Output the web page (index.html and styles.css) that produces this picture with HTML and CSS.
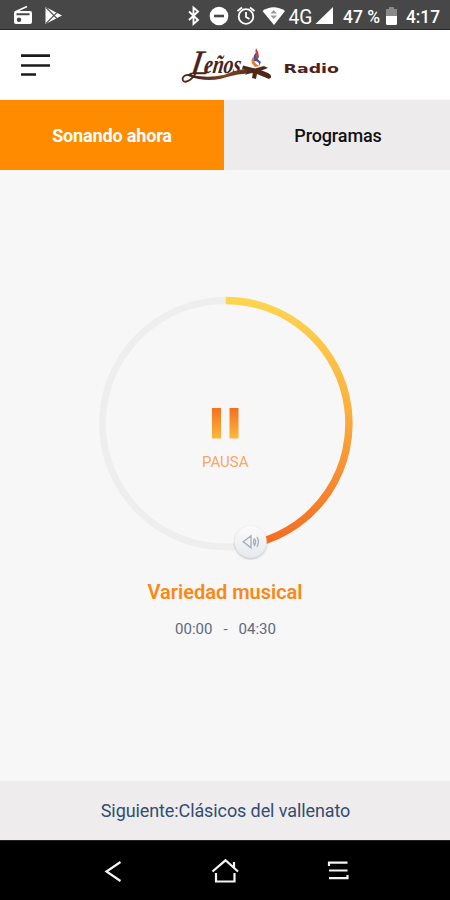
FILE: index.html
```html
<!DOCTYPE html>
<html lang="es">
<head>
<meta charset="utf-8">
<title>Leños Radio</title>
<link rel="stylesheet" href="styles.css">
</head>
<body>
<div class="app">
  <div class="status">
    <svg width="70" height="30" viewBox="0 0 70 30">
      <path d="M15 12 27 6.500" stroke="#fff" stroke-width="1.600"/>
      <path fill="#fff" fill-rule="evenodd" d="M16 11H30Q32 11 32 13V22Q32 24 30 24H16Q14 24 14 22V13Q14 11 16 11ZM16.500 13.300V15.300H29.500V13.300ZM19 17.500A2.200 2.200 0 1 0 19 22A2.200 2.200 0 1 0 19 17.500Z"/>
      <path fill="#fff" d="M45.500 7 62 15.500 45.500 24Z"/>
      <path d="M46 7.500 57 18.500M46 23.500 57 12.500" stroke="#555" stroke-width="1.100"/>
    </svg>
    <svg width="270" height="30" viewBox="180 0 270 30">
      <path d="M189 11.500 198 20 193.500 24V7.500L198 11.500 189 20" fill="none" stroke="#fff" stroke-width="1.900"/>
      <circle cx="219" cy="16" r="9.300" fill="#fff"/>
      <path d="M214 16H224" stroke="#474747" stroke-width="2.600"/>
      <g fill="none" stroke="#fff" stroke-width="1.800">
        <circle cx="246" cy="16.500" r="7.300"/>
        <path d="M246 12V17L249.500 19M237.500 11 242 7.500M254.500 11 250 7.500"/>
      </g>
      <path fill="#fff" d="M262.500 11Q273.500 3.500 285 11L274 25Z"/>
      <path fill="#999" d="M270.500 13.500 273.700 10 277 13.500ZM270.500 15.500H277L273.700 19Z"/>
      <text class="net" x="288.500" y="24" textLength="24" lengthAdjust="spacingAndGlyphs">4G</text>
      <path fill="#fff" d="M315.500 24 333 7V24Z"/>
      <text class="digits" x="343" y="22.500" textLength="37" lengthAdjust="spacingAndGlyphs">47 %</text>
      <path fill="#898989" d="M389 7H394V9H397V16H386V9H389Z"/>
      <path fill="#fff" d="M386 16H397V23.500Q397 25 395.500 25H387.500Q386 25 386 23.500Z"/>
      <text class="digits" x="406" y="22.500" textLength="34" lengthAdjust="spacingAndGlyphs">4:17</text>
    </svg>
  </div>
  <header class="header">
    <svg class="menu" width="30" height="23" viewBox="0 0 30 23">
      <path d="M0 1.700H29M0 11.500H29M0 20.500H15" stroke="#1b1b1f" stroke-width="2.700"/>
    </svg>
    <svg class="logo" width="170" height="46" viewBox="175 40 170 46">
      <defs>
        <linearGradient id="wood"><stop offset="0" stop-color="#3b2018"/><stop offset=".45" stop-color="#7b4327"/><stop offset="1" stop-color="#3b2018"/></linearGradient>
      </defs>
      <text class="brand" transform="translate(190 74) skewX(-8)"><tspan class="cap">L</tspan><tspan x="13" y="-1.500" textLength="37" lengthAdjust="spacingAndGlyphs">eños</tspan></text>
      <path fill="none" stroke="#51291b" stroke-width="1.800" stroke-linecap="round" d="M196 73C191 81 183 85 182.500 78.500Q184 74 191 75"/>
      <path fill="url(#wood)" d="M188 74Q205 79 224 75Q243 67 258 69L268 73Q273 76 270 78.500Q264 77 256 73Q238 73 220 79Q204 82 188 76Z"/>
      <path fill="#50281b" d="M243 65.500 255 68.500 264 66 268 68 260 71 271 76 269 79 257 74 256 79 252 78 253 72 245 75 249 70 242 69Z"/>
      <path fill="#e4802d" d="M255 67Q249 62 253 57Q254 64 260 66Z"/>
      <path fill="#4452a0" d="M254 61Q252 55 257 52Q255 58 261 62L259 66Q260 61 254 61Z"/>
      <path fill="#c04339" d="M256 54Q255 50 256 48Q259 52 259 57L257 60Z"/>
      <text class="radio" x="283.500" y="73.200" textLength="55.500" lengthAdjust="spacingAndGlyphs">Radio</text>
    </svg>
  </header>
  <nav class="tabs">
    <div class="tab on"><span>Sonando ahora</span></div>
    <div class="tab"><span>Programas</span></div>
  </nav>
  <main class="player">
    <svg class="dial" width="270" height="270" viewBox="90 290 270 270">
      <defs>
        <linearGradient id="arc" x1="0" y1="297" x2="0" y2="545" gradientUnits="userSpaceOnUse"><stop offset="0" stop-color="#fdd64f"/><stop offset=".45" stop-color="#fbb03f"/><stop offset="1" stop-color="#f36b21"/></linearGradient>
        <linearGradient id="bar" x1="0" y1="0" x2="0" y2="1"><stop offset="0" stop-color="#f3701f"/><stop offset="1" stop-color="#fcb93c"/></linearGradient>
        <linearGradient id="knob" x1="0" y1="0" x2="0" y2="1"><stop offset="0" stop-color="#fafbfc"/><stop offset="1" stop-color="#e6e9ed"/></linearGradient>
        <filter id="shade" x="-30%" y="-30%" width="160%" height="160%"><feDropShadow dx="0" dy="1" stdDeviation="1.200" flood-color="#8a929b" flood-opacity=".6"/></filter>
      </defs>
      <circle cx="225.700" cy="423.700" r="123.200" fill="none" stroke="#eee" stroke-width="6.800"/>
      <path d="M225.700 300.500A123.200 123.200 0 0 1 258 542.600" fill="none" stroke="url(#arc)" stroke-width="7.400"/>
      <path d="M212 408H221V438.500H212ZM229.500 408H238.500V438.500H229.500Z" fill="url(#bar)"/>
      <text class="pause" x="202" y="467" textLength="46.500" lengthAdjust="spacingAndGlyphs">PAUSA</text>
      <circle cx="250.700" cy="542" r="16" fill="url(#knob)" filter="url(#shade)"/>
      <path d="M243.300 541.800 251 535.800V547.800ZM254.500 538.500Q252.500 541.800 254.500 545.300Q256.800 541.800 254.500 538.500M257 537Q260 541.800 257 546.800" fill="none" stroke="#a5adb7" stroke-width="1.300"/>
    </svg>
    <h1 class="title">Variedad musical</h1>
    <div class="time"><span>00:00</span><span>-</span><span>04:30</span></div>
  </main>
  <div class="next"><span>Siguiente:Clásicos del vallenato</span></div>
  <footer class="keys">
    <svg width="18" height="22" viewBox="104 859 18 22"><path d="M120.500 861 106.500 870.500 120.500 880"/></svg>
    <svg width="30" height="28" viewBox="210 857 30 28"><path d="M212.500 871.500 225.500 860.300 238 871.500M216 873V881.500H234.500V873M234 862V867.500"/></svg>
    <svg width="22" height="22" viewBox="327 860 22 22"><path d="M329 866V862.700H347.500M329 870.500H347.500M329 878.200H347.500V875"/></svg>
  </footer>
</div>
</body>
</html>
```
FILE: styles.css
```css
* { box-sizing: border-box; }
body { margin: 0; font-family: Roboto, "Liberation Sans", sans-serif; background: #f7f7f7; }
svg { display: block; flex: none; }
.app { width: 450px; height: 900px; display: flex; flex-direction: column; overflow: hidden; }
.status { height: 30px; background: #474747; border-bottom: 1px solid #2b2727; display: flex; justify-content: space-between; overflow: hidden; }
.net { font-size: 21px; fill: #fff; }
.digits { font-size: 18px; font-weight: 500; fill: #fff; }
.header { height: 70px; background: #fff; display: flex; align-items: flex-start; padding: 10px 0 0 21px; border-bottom: 1px solid #fcfaf0; }
.menu { margin: 14px 0 0; }
.logo { margin-left: 124px; }
.brand { font: italic bold 26px "Liberation Serif", serif; fill: #47241a; }
.cap { font-size: 34px; font-weight: normal; stroke: #47241a; stroke-width: .5px; }
.radio { font: bold 12.5px "DejaVu Sans", sans-serif; fill: #4c211b; }
.tabs { height: 70px; display: grid; grid-template-columns: 224px 226px; }
.tab { display: flex; align-items: center; justify-content: center; background: #edebec; color: #111; font-size: 18px; font-weight: 500; padding: 1px 0 0 2px; letter-spacing: -.12px; }
.tab.on { background: #ff8c00; color: #fff; padding-left: 0; font-weight: 700; letter-spacing: -.15px; }
.player { flex: 1; display: flex; flex-direction: column; align-items: center; background: #f7f7f7; padding-top: 120px; }
.pause { font-size: 15.5px; fill: #f7a668; }
.title { margin: 19px 0 0; font-size: 20px; line-height: 26px; font-weight: 600; color: #fb8714; letter-spacing: 0; }
.time { margin: 14px 0 0 1px; display: flex; gap: 11px; font-size: 15px; line-height: 20px; color: #5e6880; }
.next { height: 59px; background: #eeecec; display: flex; align-items: center; justify-content: center; color: #334d72; font-size: 18px; letter-spacing: -.1px; padding-left: 1px; }
.keys { height: 60px; background: #000; border-top: 1px solid #222; display: flex; align-items: center; justify-content: space-between; padding: 0 101px 0 104px; }
.keys path { fill: none; stroke: #f4f4f4; stroke-width: 2.2; }
```
